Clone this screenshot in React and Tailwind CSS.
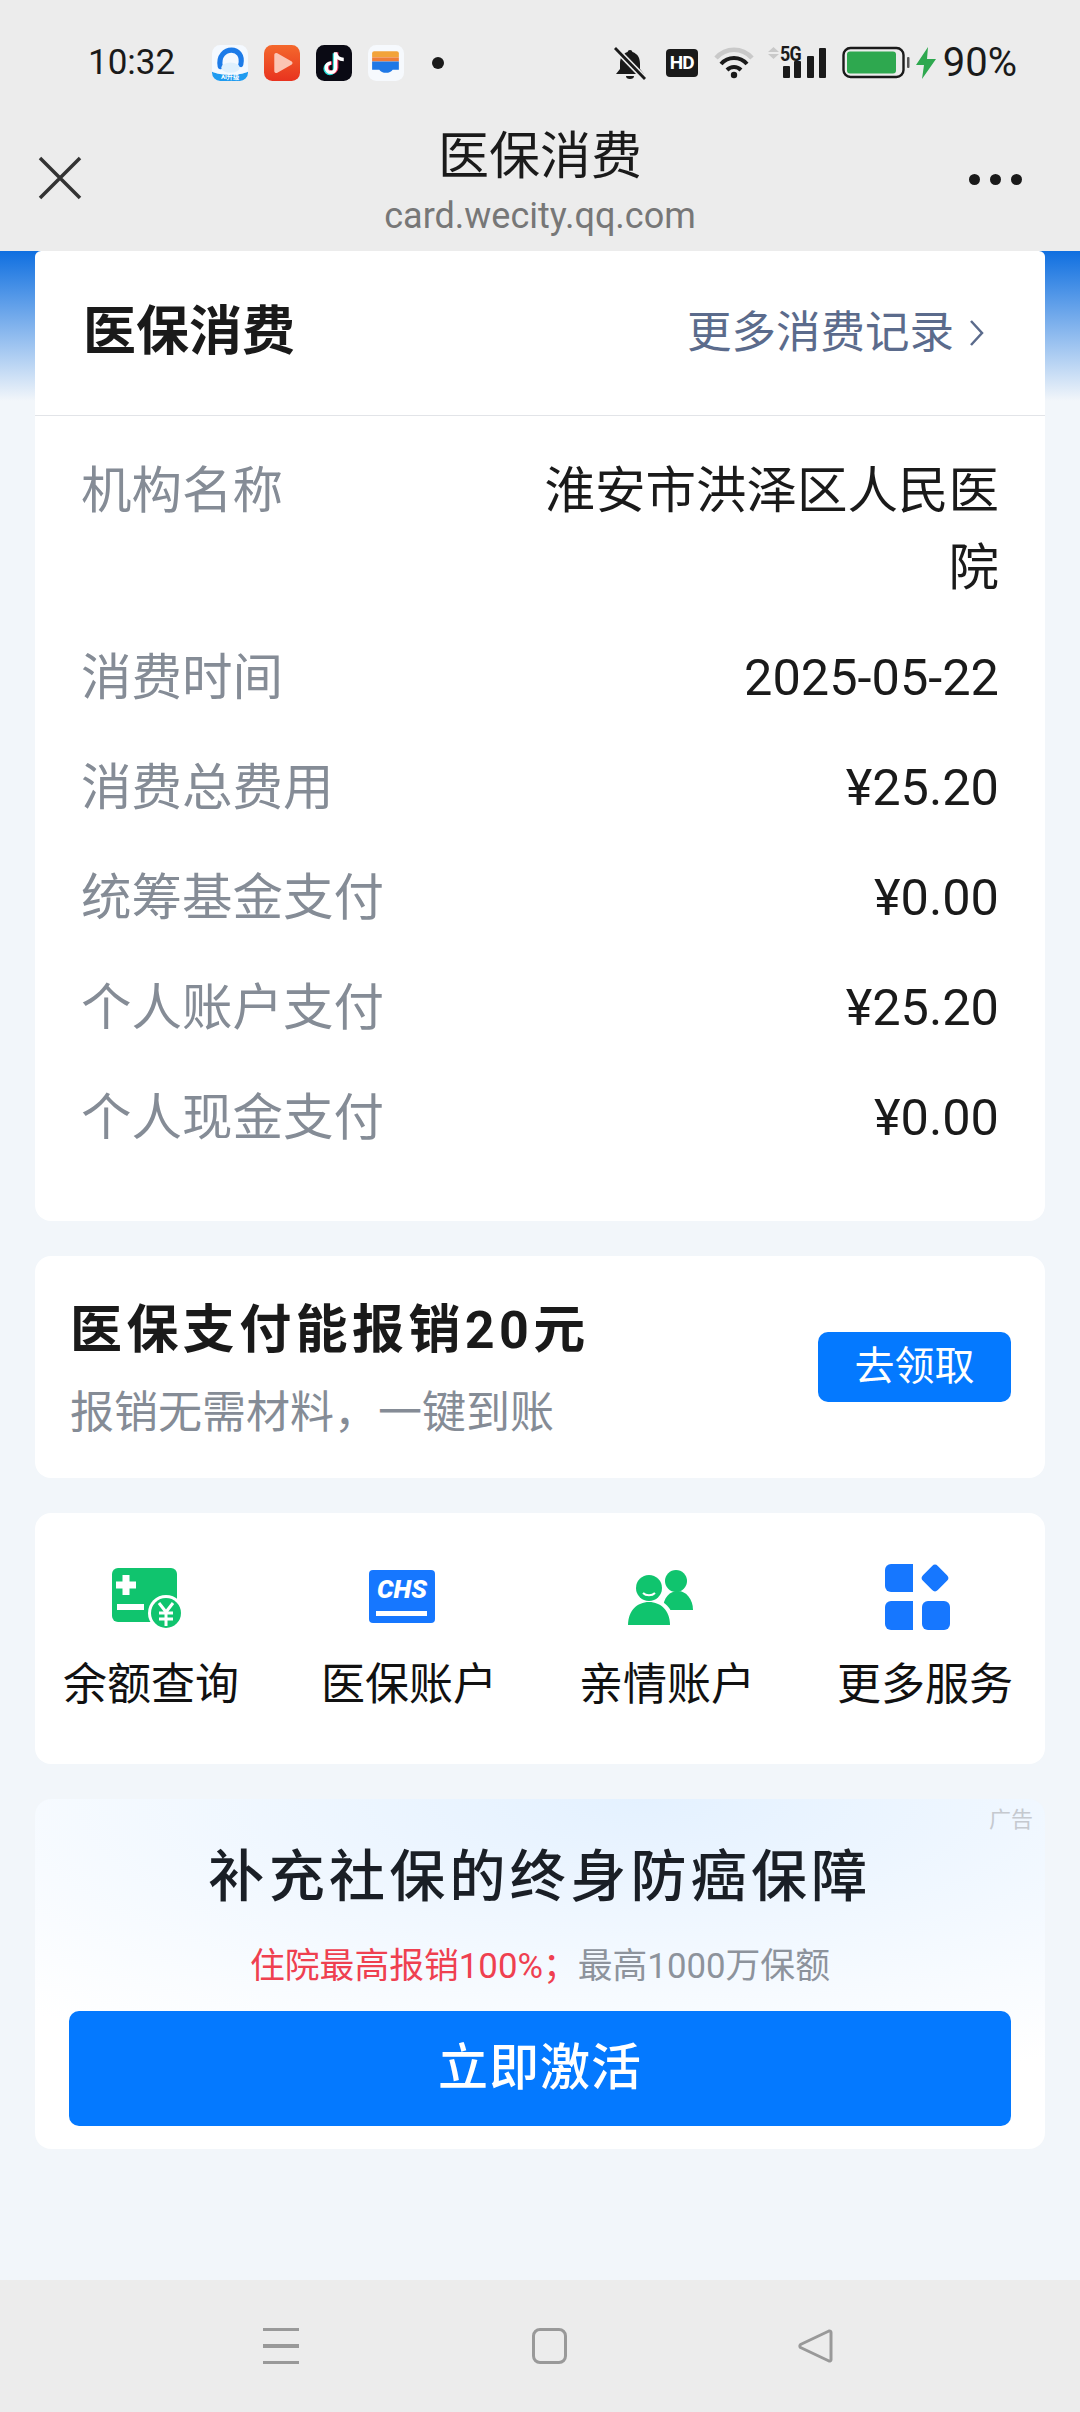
import React from "react";

function AppIcons() {
  return (
    <div className="flex items-center ml-[37px] gap-[16px]">
      <svg width="36" height="36" viewBox="0 0 35 35">
        <rect width="35" height="35" rx="8" fill="#f4f9ff" />
        <path d="M0 26 C8 30 27 30 35 26 V27 a8 8 0 0 1 -8 8 H8 a8 8 0 0 1 -8 -8Z" fill="#1f9bf0" />
        <path d="M8 21 C6 10 13 5 19 5 C25 5 30 10 28 19" fill="none" stroke="#1d7be8" strokeWidth="5" strokeLinecap="round" />
        <ellipse cx="18" cy="22" rx="9" ry="5" fill="#dff0fd" />
        <text x="17.5" y="33" textAnchor="middle" fontSize="6" fontWeight="700" fill="#fff">AI升级</text>
      </svg>
      <svg width="36" height="36" viewBox="0 0 35 35">
        <defs>
          <linearGradient id="pl" x1="0" y1="0" x2="0" y2="1">
            <stop offset="0" stopColor="#f4682c" />
            <stop offset="1" stopColor="#e8331f" />
          </linearGradient>
        </defs>
        <rect width="35" height="35" rx="8" fill="url(#pl)" />
        <path d="M10 10 a2 2 0 0 1 3 -2 L27 16 a2 2 0 0 1 0 3 L13 27 a2 2 0 0 1 -3 -2Z" fill="#fbc5b4" />
      </svg>
      <svg width="36" height="36" viewBox="0 0 35 35">
        <rect width="35" height="35" rx="8" fill="#0a0a14" />
        <path d="M19 7 V22 a4.5 4.5 0 1 1 -4.5 -4.5" fill="none" stroke="#25e0dc" strokeWidth="3.6" transform="translate(-1 1)" />
        <path d="M19 7 V22 a4.5 4.5 0 1 1 -4.5 -4.5" fill="none" stroke="#f0325a" strokeWidth="3.6" transform="translate(1 0)" />
        <path d="M19 7 V22 a4.5 4.5 0 1 1 -4.5 -4.5 M19 8 C20 12 23 14 27 14" fill="none" stroke="#fff" strokeWidth="3.4" />
      </svg>
      <svg width="36" height="36" viewBox="0 0 35 35">
        <rect width="35" height="35" rx="8" fill="#f6f9fd" />
        <path d="M4 8 a2 2 0 0 1 2 -2 H28 a2 2 0 0 1 2 2 V12 H4Z" fill="#f2a33a" />
        <rect x="4" y="12" width="26" height="4" fill="#ee7d3a" />
        <path d="M4 16 H30 V24 H24 C22 28 13 28 11 24 H4Z" fill="#1f78e6" />
      </svg>
      <div className="ml-[12px] w-[12px] h-[12px] rounded-full bg-[#1a1a1a]" />
    </div>
  );
}

function StatusRight() {
  return (
    <div className="flex items-center">
      <svg width="34" height="36" viewBox="0 0 34 36" className="mr-[19px]">
        <path d="M17 5 a2.5 2.5 0 0 1 2.5 2 C25 9 27 13 27 19 V24 L31 29 H3 L7 24 V19 C7 13 9 9 14.500 7 A2.500 2.500 0 0 1 17 5Z" fill="#1a1a1a" />
        <path d="M13 31 a4 3 0 0 0 8 0Z" fill="#1a1a1a" />
        <path d="M2 3 L32 34" stroke="#ececec" strokeWidth="6" />
        <path d="M2 3 L32 34" stroke="#1a1a1a" strokeWidth="2.800" />
      </svg>
      <div className="mr-[16px] flex items-center justify-center w-[32px] h-[28px] rounded-[4px] bg-[#1a1a1a] text-white text-[19px] font-bold leading-none tracking-[-1px]">HD</div>
      <svg width="40" height="33" viewBox="0 0 40 33" className="mr-[13px]">
        <path d="M2 12 C12 1 28 1 38 12" fill="none" stroke="#c9c9c9" strokeWidth="4.500" />
        <path d="M7 18 C14 10 26 10 33 18" fill="none" stroke="#1a1a1a" strokeWidth="4" />
        <path d="M13 24 C17 20 23 20 27 24" fill="none" stroke="#1a1a1a" strokeWidth="4" />
        <circle cx="20" cy="29" r="3.200" fill="#1a1a1a" />
      </svg>
      <div className="relative w-[60px] h-[33px]">
        <svg width="60" height="33" viewBox="0 0 60 33" className="absolute left-0 top-0">
          <path d="M6.500 1 L12 6 H1Z M1 8 H12 L6.500 13Z" fill="#c9c9c9" />
          <rect x="16" y="20" width="7" height="12" rx="1" fill="#1a1a1a" />
          <rect x="27" y="15" width="7" height="17" rx="1" fill="#1a1a1a" />
          <rect x="40" y="10" width="7" height="22" rx="1" fill="#1a1a1a" />
          <rect x="52" y="2" width="7" height="30" rx="1" fill="#1a1a1a" />
        </svg>
        <div className="absolute left-[13px] -top-[2px] text-[21px] leading-[20px] font-bold text-[#1a1a1a] tracking-[-1px] [transform:scaleX(0.85)] origin-left">5G</div>
      </div>
      <svg width="68" height="33" viewBox="0 0 68 33" className="ml-[15px] mr-[6px]">
        <rect x="1.500" y="2" width="60" height="29" rx="7" fill="none" stroke="#1a1a1a" strokeWidth="2.400" />
        <rect x="5" y="5.500" width="49" height="22" rx="3" fill="#2ea84f" />
        <rect x="65" y="11" width="2.500" height="11" rx="1" fill="#555" />
      </svg>
      <svg width="20" height="32" viewBox="0 0 20 32" className="mr-[7px]">
        <path d="M12 0 L0 18 H8 L6 32 L20 12 H11Z" fill="#2ea84f" />
      </svg>
      <span className="text-[40px] leading-none text-[#1a1a1a]">90%</span>
    </div>
  );
}

function Row({ label, value }) {
  return (
    <div className="flex justify-between items-start text-[50.500px] leading-[77px]">
      <span className="text-[#858c96]">{label}</span>
      <span className="w-[480px] text-right text-[#1a1a1a]">{value}</span>
    </div>
  );
}

function IconBalance() {
  return (
    <svg width="88" height="72" viewBox="0 0 88 72">
      <rect x="5" y="7" width="65" height="54" rx="6" fill="#10c46e" />
      <path d="M19 14 V34 M9 24 H29" stroke="#fff" strokeWidth="7" />
      <rect x="10" y="43" width="27" height="6" fill="#fff" />
      <circle cx="59" cy="52" r="18" fill="#fff" />
      <circle cx="59" cy="52" r="15" fill="#10c46e" />
      <path d="M52 42 L59 51 L66 42 M52 52 H66 M52 58 H66 M59 51 V65" fill="none" stroke="#fff" strokeWidth="3" />
    </svg>
  );
}
function IconChs() {
  return (
    <svg width="88" height="72" viewBox="0 0 88 72">
      <rect x="4" y="9" width="66" height="53" rx="4" fill="#1677ff" />
      <text x="37" y="37" textAnchor="middle" fontSize="25" fontWeight="900" fontStyle="italic" fill="#fff" textLength="50" lengthAdjust="spacingAndGlyphs">CHS</text>
      <rect x="11" y="50" width="51" height="5" fill="#fff" />
    </svg>
  );
}
function IconFamily() {
  return (
    <svg width="88" height="72" viewBox="0 0 88 72">
      <circle cx="53" cy="20" r="11" fill="#10c46e" />
      <path d="M40 49 C40 36 47 30 55 30 C63 30 70 38 70 49Z" fill="#10c46e" />
      <circle cx="26" cy="27" r="16" fill="#fff" />
      <path d="M0 66 C2 48 12 37 26 37 C40 37 52 48 52 66Z" fill="#fff" />
      <circle cx="26" cy="27" r="13" fill="#10c46e" />
      <path d="M5 64 C5 50 14 41 26 41 C38 41 47 50 47 64Z" fill="#10c46e" />
      <path d="M20 32 C23 35 29 35 32 32" fill="none" stroke="#fff" strokeWidth="2" />
    </svg>
  );
}
function IconMore() {
  return (
    <svg width="88" height="72" viewBox="0 0 88 72">
      <path d="M10 3 H32 V31 H10 a6 6 0 0 1 -6 -6 V9 a6 6 0 0 1 6 -6Z" fill="#1677ff" />
      <path d="M10 40 H32 V69 H10 a6 6 0 0 1 -6 -6 V46 a6 6 0 0 1 6 -6Z" fill="#1677ff" />
      <rect x="41" y="40" width="28" height="29" rx="6" fill="#1677ff" />
      <rect x="43.500" y="6.500" width="21" height="21" rx="4" transform="rotate(45 54 17)" fill="#1677ff" />
    </svg>
  );
}

function Service({ icon, label }) {
  return (
    <div className="w-[178px] flex flex-col items-center">
      {icon}
      <span className="mt-[26px] text-[44px] leading-[52px] text-[#111]">{label}</span>
    </div>
  );
}

export default function App() {
  return (
    <div className="w-[1080px] h-[2412px] flex flex-col overflow-hidden bg-[#f2f6fa] [font-family:Roboto,'Noto_Sans_CJK_SC',sans-serif]">
      <div className="shrink-0 h-[125px] bg-[#ececec] flex items-center justify-between pl-[88px] pr-[63px]">
        <div className="flex items-center">
          <span className="text-[35px] leading-none text-[#1a1a1a]">10:32</span>
          <AppIcons />
        </div>
        <StatusRight />
      </div>

      <div className="shrink-0 h-[126px] bg-[#ececec] flex items-start">
        <div className="flex-1">
          <svg width="46" height="46" viewBox="0 0 46 46" className="ml-[37px] mt-[30px]">
            <path d="M3 3 L43 43 M43 3 L3 43" stroke="#333" strokeWidth="3.500" />
          </svg>
        </div>
        <div className="flex flex-col items-center">
          <span className="text-[51px] leading-[62px] mt-[1px] text-[#1a1a1a]">医保消费</span>
          <span className="text-[36px] leading-[44px] mt-[6px] text-[#777]">card.wecity.qq.com</span>
        </div>
        <div className="flex-1 flex justify-end">
          <div className="mr-[58px] mt-[49px] flex gap-[10px]">
            <div className="w-[11px] h-[11px] rounded-full bg-[#1a1a1a]" />
            <div className="w-[11px] h-[11px] rounded-full bg-[#1a1a1a]" />
            <div className="w-[11px] h-[11px] rounded-full bg-[#1a1a1a]" />
          </div>
        </div>
      </div>

      <div className="flex-1 flex flex-col gap-[35px] px-[35px] bg-[linear-gradient(#0f6fe0,#f2f6fa)] bg-no-repeat bg-[length:100%_150px]">
        <div className="bg-white rounded-t-[6px] rounded-b-[16px]">
          <div className="h-[165px] flex items-center justify-between pl-[48px] pr-[59px] border-b border-[#e2e4e8]">
            <span className="text-[53px] font-bold text-[#1a1a1a]">医保消费</span>
            <span className="flex items-center text-[44.500px] text-[#5b6b8c]">
              更多消费记录
              <svg width="18" height="30" viewBox="0 0 18 30" className="ml-[14px]">
                <path d="M3 3 L14 15 L3 27" fill="none" stroke="#5b6b8c" strokeWidth="2.500" />
              </svg>
            </span>
          </div>
          <div className="flex flex-col gap-[33.200px] pt-[35.500px] pb-[64.500px] pl-[46px] pr-[46px]">
            <Row label="机构名称" value="淮安市洪泽区人民医院" />
            <Row label="消费时间" value="2025-05-22" />
            <Row label="消费总费用" value="¥25.20" />
            <Row label="统筹基金支付" value="¥0.00" />
            <Row label="个人账户支付" value="¥25.20" />
            <Row label="个人现金支付" value="¥0.00" />
          </div>
        </div>

        <div className="h-[222px] bg-white rounded-[16px] flex items-center justify-between pl-[35px] pr-[34px]">
          <div className="flex flex-col pt-[6px]">
            <span className="text-[52px] leading-[70px] font-bold tracking-[4.400px] text-[#1a1a1a]">医保支付能报销20元</span>
            <span className="text-[44px] leading-[62px] mt-[16px] text-[#858c96]">报销无需材料，一键到账</span>
          </div>
          <div className="w-[193px] h-[70px] rounded-[10px] bg-[#0479ff] text-white text-[40px] flex items-center justify-center">去领取</div>
        </div>

        <div className="h-[251px] bg-white rounded-[16px] flex justify-between pl-[27px] pr-[31px] pt-[48px]">
          <Service icon={<IconBalance />} label="余额查询" />
          <Service icon={<IconChs />} label="医保账户" />
          <Service icon={<IconFamily />} label="亲情账户" />
          <Service icon={<IconMore />} label="更多服务" />
        </div>

        <div className="relative h-[350px] rounded-[16px] bg-white bg-[radial-gradient(ellipse_900px_290px_at_60%_0%,#e4f1ff,#ffffff)] flex flex-col items-center px-[34px]">
          <span className="absolute right-[12px] top-[9px] text-[22px] leading-[24px] text-[#c5c9cf]">广告</span>
          <span className="mt-[47px] text-[56px] leading-[62px] tracking-[4.300px] font-medium text-[#1a1f26]">补充社保的终身防癌保障</span>
          <span className="mt-[34px] text-[34.800px] leading-[48px]">
            <span className="text-[#ef4050]">住院最高报销100%；</span>
            <span className="text-[#8d939c]">最高1000万保额</span>
          </span>
          <div className="mt-[21px] w-full h-[115px] rounded-[10px] bg-[#0479ff] text-white text-[50px] font-medium tracking-[1px] flex items-center justify-center">立即激活</div>
        </div>
      </div>

      <div className="shrink-0 h-[132px] bg-[#ececec] flex items-center pl-[263px]">
        <div className="w-[36px] flex flex-col gap-[13px]">
          <div className="h-[3.500px] bg-[#999]" />
          <div className="h-[3.500px] bg-[#999]" />
          <div className="h-[3.500px] bg-[#999]" />
        </div>
        <div className="ml-[233px] w-[35px] h-[36px] rounded-[8px] border-[3px] border-[#999]" />
        <svg width="36" height="36" viewBox="0 0 36 36" className="ml-[230px]">
          <path d="M32 3 a1.500 1.500 0 0 1 2 1.500 V31.500 a1.500 1.500 0 0 1 -2 1.500 L3.500 19.500 a2 2 0 0 1 0 -3Z" fill="none" stroke="#999" strokeWidth="3" strokeLinejoin="round" />
        </svg>
      </div>
    </div>
  );
}
